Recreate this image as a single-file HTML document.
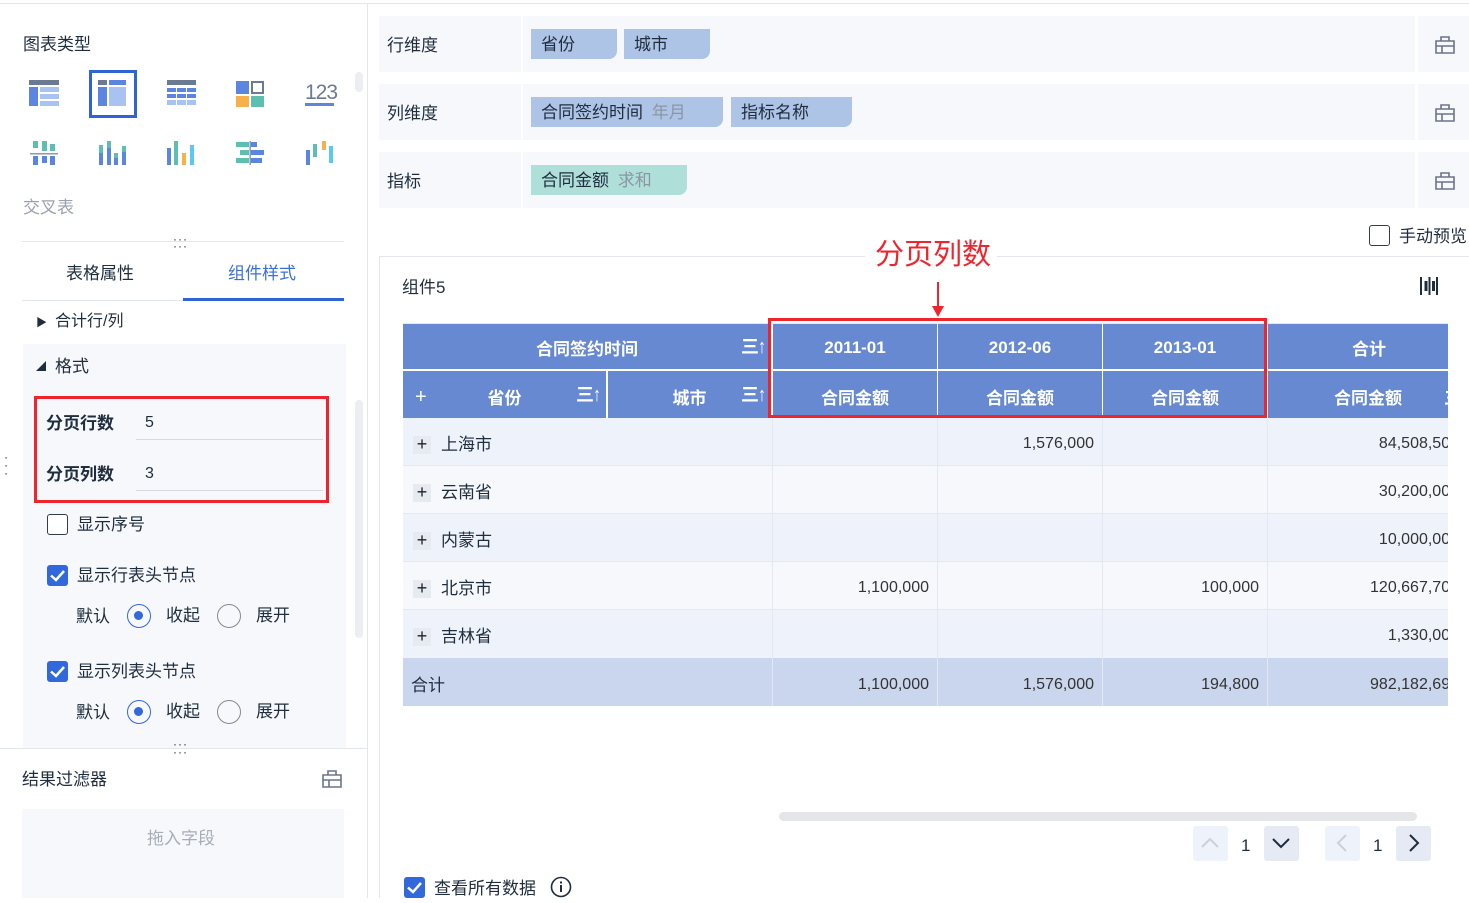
<!DOCTYPE html>
<html><head><meta charset="utf-8"><style>
*{box-sizing:border-box;margin:0;padding:0}
body{width:1469px;height:898px;overflow:hidden;background:#fff;font-family:"Liberation Sans","Noto Sans CJK SC",sans-serif;color:#1f2d3d;font-size:17px;position:relative}
.a{position:absolute}
.t{position:absolute;white-space:nowrap;line-height:1;transform:translateY(2px)}
.hc{position:absolute;background:#6689d2;color:#fff;font-weight:bold;font-size:17px;display:flex;align-items:center;justify-content:center;padding-top:3px}
.cell{position:absolute;text-align:right;padding-right:8px;line-height:48px;font-size:16px;color:#333;border-left:1px solid #e3e8f2}
.plus{position:absolute;width:18px;height:18px;background:#e6eaf1;color:#222;font-size:18px;line-height:17px;text-align:center;transform:translateY(2px)}
.chip{position:absolute;height:30px;background:#aec4e7;border-radius:0 0 8px 0;line-height:30px;padding-left:10px;font-size:17px;color:#1f2d3d;padding-top:1px}
.cb{position:absolute;width:21px;height:21px;border:1.5px solid #333c4a;border-radius:3px;background:#fff}
.cbc{position:absolute;width:21px;height:21px;border-radius:3px;background:#3168dc}
.rad{position:absolute;width:24px;height:24px;border-radius:50%;border:1.5px solid #888}
.rad.on{border-color:#3168dc}
.rad.on::after{content:"";position:absolute;left:6px;top:6px;width:9px;height:9px;border-radius:50%;background:#3168dc}
.srt{position:absolute;color:#fff;font-size:18px;font-weight:bold;white-space:nowrap;line-height:1}
.srt b{display:inline-block;font-size:20px;margin-left:-2px;transform:scaleX(.8)}
</style></head><body>
<div class="a" style="left:0;top:3px;width:1469px;height:1px;background:#e5e7eb"></div>
<div class="a" style="left:367px;top:4px;width:1px;height:894px;background:#e3e6ec"></div>
<div class="t" style="left:23px;top:34px">图表类型</div>
<svg class="a" style="left:26px;top:80px" width="34" height="28"><rect x="3" y="0" width="30" height="5" fill="#6b7a93"/><rect x="3" y="7" width="9" height="19" fill="#5b85e0"/><rect x="14" y="7" width="19" height="5" fill="#a8c2f2"/><rect x="14" y="14" width="19" height="5" fill="#a8c2f2"/><rect x="14" y="21" width="19" height="5" fill="#a8c2f2"/></svg>
<div class="a" style="left:89px;top:70px;width:48px;height:48px;border:3px solid #2f64d6"></div>
<svg class="a" style="left:98px;top:80px" width="30" height="28"><rect x="0" y="0" width="9" height="5" fill="#6b7a93"/><rect x="11" y="0" width="17" height="5" fill="#5b85e0"/><rect x="0" y="7" width="9" height="19" fill="#5b85e0"/><rect x="11" y="7" width="17" height="19" fill="#a8c2f2"/></svg>
<svg class="a" style="left:166px;top:80px" width="32" height="28"><rect x="1" y="0" width="29" height="5" fill="#6b7a93"/><g fill="#5b85e0"><rect x="1" y="8" width="9" height="4"/><rect x="11" y="8" width="9" height="4"/><rect x="21" y="8" width="9" height="4"/><rect x="1" y="14" width="9" height="4"/><rect x="11" y="14" width="9" height="4"/><rect x="21" y="14" width="9" height="4"/></g><g fill="#a8c2f2"><rect x="1" y="20" width="9" height="5"/><rect x="11" y="20" width="9" height="5"/><rect x="21" y="20" width="9" height="5"/></g></svg>
<svg class="a" style="left:236px;top:81px" width="30" height="27"><rect x="0" y="0" width="13" height="13" fill="#5b85e0"/><rect x="16" y="1" width="11" height="11" fill="none" stroke="#6b7a93" stroke-width="2"/><rect x="0" y="15" width="13" height="11" fill="#f7b04a"/><rect x="15" y="15" width="13" height="11" fill="#5dbfb0"/></svg>
<div class="t" style="left:305px;top:80px;font-size:21px;color:#6b7a93;letter-spacing:-1px">123</div>
<div class="a" style="left:305px;top:103px;width:29px;height:3px;background:#5b85e0"></div>
<svg class="a" style="left:30px;top:141px" width="28" height="26"><rect x="3" y="0" width="5" height="7" fill="#5dbfb0"/><rect x="12" y="0" width="5" height="10" fill="#5dbfb0"/><rect x="20" y="3" width="5" height="7" fill="#5dbfb0"/><rect x="0" y="12" width="28" height="1.5" fill="#8d99ad"/><rect x="3" y="15" width="5" height="9" fill="#5b85e0"/><rect x="12" y="15" width="5" height="7" fill="#5b85e0"/><rect x="20" y="15" width="5" height="9" fill="#5b85e0"/></svg>
<svg class="a" style="left:98px;top:141px" width="30" height="26"><rect x="1" y="4" width="4" height="20" fill="#5b85e0"/><rect x="1" y="4" width="4" height="8" fill="#5dbfb0"/><rect x="9" y="0" width="4" height="24" fill="#5b85e0"/><rect x="9" y="0" width="4" height="7" fill="#5dbfb0"/><rect x="16" y="12" width="4" height="12" fill="#5b85e0"/><rect x="16" y="12" width="4" height="5" fill="#5dbfb0"/><rect x="24" y="5" width="4" height="19" fill="#5b85e0"/><rect x="24" y="5" width="4" height="6" fill="#5dbfb0"/></svg>
<svg class="a" style="left:166px;top:141px" width="30" height="26"><rect x="1" y="7" width="4" height="17" fill="#5b85e0"/><rect x="8" y="0" width="4" height="24" fill="#5dbfb0"/><rect x="16" y="12" width="4" height="12" fill="#f7b04a"/><rect x="24" y="4" width="4" height="20" fill="#5ac8f0"/></svg>
<svg class="a" style="left:236px;top:141px" width="30" height="26"><rect x="0" y="1" width="13" height="5" fill="#5dbfb0"/><rect x="15" y="1" width="6" height="5" fill="#5b85e0"/><rect x="4" y="9" width="9" height="5" fill="#5dbfb0"/><rect x="15" y="9" width="13" height="5" fill="#5b85e0"/><rect x="0" y="17" width="13" height="5" fill="#5dbfb0"/><rect x="15" y="17" width="11" height="5" fill="#5b85e0"/><rect x="13.5" y="0" width="1.5" height="24" fill="#8d99ad"/></svg>
<svg class="a" style="left:305px;top:141px" width="30" height="26"><rect x="1" y="9" width="4" height="15" fill="#5b85e0"/><rect x="8" y="3" width="4" height="13" fill="#5dbfb0"/><rect x="17" y="0" width="4" height="9" fill="#f7b04a"/><rect x="24" y="5" width="4" height="17" fill="#5ac8f0"/></svg>
<div class="a" style="left:355px;top:72px;width:8px;height:20px;border-radius:4px;background:#eceef2"></div>
<div class="t" style="left:23px;top:197px;color:#9aa1ad">交叉表</div>
<div class="t" style="left:173px;top:231px;font-size:12px;letter-spacing:1px;color:#333">···</div>
<div class="a" style="left:22px;top:241px;width:322px;height:1px;background:#e3e6ec"></div>
<div class="t" style="left:173px;top:238px;font-size:12px;letter-spacing:1px;color:#333">···</div>
<div class="t" style="left:66px;top:263px">表格属性</div>
<div class="t" style="left:228px;top:263px;color:#3a6fe0">组件样式</div>
<div class="a" style="left:22px;top:300px;width:322px;height:1px;background:#e3e6ec"></div>
<div class="a" style="left:183px;top:298px;width:161px;height:3px;background:#2f64d6"></div>
<div class="t" style="left:36px;top:316px;font-size:11px">▶</div>
<div class="t" style="left:55px;top:312px;font-size:16px">合计行/列</div>
<div class="a" style="left:23px;top:344px;width:323px;height:404px;background:#f6f8fc"></div>
<div class="t" style="left:36px;top:361px;font-size:10px">◢</div>
<div class="t" style="left:55px;top:356px">格式</div>
<div class="a" style="left:355px;top:400px;width:8px;height:238px;border-radius:4px;background:#eceef2"></div>
<div class="t" style="left:4px;top:451px;font-size:12px;line-height:8px;color:#333;width:4px">·<br>·<br>·</div>
<div class="a" style="left:34px;top:396px;width:295px;height:107px;border:3px solid #f0242c"></div>
<div class="t" style="left:46px;top:413px;font-weight:bold">分页行数</div>
<div class="t" style="left:145px;top:413px;font-size:16px">5</div>
<div class="a" style="left:136px;top:439px;width:187px;height:1px;background:#d5d9e0"></div>
<div class="t" style="left:46px;top:464px;font-weight:bold">分页列数</div>
<div class="t" style="left:145px;top:464px;font-size:16px">3</div>
<div class="a" style="left:136px;top:490px;width:187px;height:1px;background:#d5d9e0"></div>
<div class="cb" style="left:47px;top:514px"></div>
<div class="t" style="left:77px;top:514px">显示序号</div>
<div class="cbc" style="left:47px;top:565px"><svg width="21" height="21"><path d="M4 10.5 L9 15 L17 6" stroke="#fff" stroke-width="2.5" fill="none"/></svg></div>
<div class="t" style="left:77px;top:565px">显示行表头节点</div>
<div class="t" style="left:76px;top:606px">默认</div>
<div class="rad on" style="left:127px;top:604px"></div>
<div class="t" style="left:166px;top:605px">收起</div>
<div class="rad" style="left:217px;top:604px"></div>
<div class="t" style="left:256px;top:605px">展开</div>
<div class="cbc" style="left:47px;top:661px"><svg width="21" height="21"><path d="M4 10.5 L9 15 L17 6" stroke="#fff" stroke-width="2.5" fill="none"/></svg></div>
<div class="t" style="left:77px;top:661px">显示列表头节点</div>
<div class="t" style="left:76px;top:702px">默认</div>
<div class="rad on" style="left:127px;top:700px"></div>
<div class="t" style="left:166px;top:701px">收起</div>
<div class="rad" style="left:217px;top:700px"></div>
<div class="t" style="left:256px;top:701px">展开</div>
<div class="t" style="left:173px;top:736px;font-size:12px;letter-spacing:1px;color:#333">···</div>
<div class="a" style="left:0;top:748px;width:367px;height:1px;background:#e3e6ec"></div>
<div class="t" style="left:173px;top:744px;font-size:12px;letter-spacing:1px;color:#333">···</div>
<div class="t" style="left:22px;top:769px">结果过滤器</div>
<svg class="a" style="left:322px;top:769px" width="20" height="20"><path d="M6 6V2h8v4M1 6h18v12H1zM1 11h18M7 11v7" stroke="#6b7589" stroke-width="1.6" fill="none"/></svg>
<div class="a" style="left:22px;top:809px;width:322px;height:89px;background:#f6f8fc"></div>
<div class="t" style="left:147px;top:828px;color:#a7adb8">拖入字段</div>

<div class="a" style="left:379px;top:16px;width:1090px;height:56px;background:#f6f8fc"></div>
<div class="a" style="left:379px;top:84px;width:1090px;height:56px;background:#f6f8fc"></div>
<div class="a" style="left:379px;top:152px;width:1090px;height:56px;background:#f6f8fc"></div>
<div class="a" style="left:521px;top:16px;width:2px;height:192px;background:#fff"></div>
<div class="a" style="left:1415px;top:16px;width:3px;height:192px;background:#fff"></div>
<div class="a" style="left:379px;top:72px;width:1090px;height:12px;background:#fff"></div>
<div class="a" style="left:379px;top:140px;width:1090px;height:12px;background:#fff"></div>
<div class="t" style="left:387px;top:35px">行维度</div>
<div class="t" style="left:387px;top:103px">列维度</div>
<div class="t" style="left:387px;top:171px">指标</div>
<div class="chip" style="left:531px;top:29px;width:86px">省份</div>
<div class="chip" style="left:624px;top:29px;width:86px">城市</div>
<div class="chip" style="left:531px;top:97px;width:192px">合同签约时间 <span style="color:#8d95a3;margin-left:4px">年月</span></div>
<div class="chip" style="left:731px;top:97px;width:121px">指标名称</div>
<div class="chip" style="left:531px;top:165px;width:156px;background:#afdfd9">合同金额 <span style="color:#8d95a3;margin-left:4px">求和</span></div>
<svg class="a" style="left:1435px;top:35px" width="20" height="20"><path d="M6 6V2h8v4M1 6h18v12H1zM1 11h18M7 11v7" stroke="#6b7589" stroke-width="1.6" fill="none"/></svg>
<svg class="a" style="left:1435px;top:103px" width="20" height="20"><path d="M6 6V2h8v4M1 6h18v12H1zM1 11h18M7 11v7" stroke="#6b7589" stroke-width="1.6" fill="none"/></svg>
<svg class="a" style="left:1435px;top:171px" width="20" height="20"><path d="M6 6V2h8v4M1 6h18v12H1zM1 11h18M7 11v7" stroke="#6b7589" stroke-width="1.6" fill="none"/></svg>
<div class="cb" style="left:1369px;top:225px"></div>
<div class="t" style="left:1399px;top:226px">手动预览</div>

<div class="a" style="left:379px;top:256px;width:1090px;height:1px;background:#e3e6ef"></div>
<div class="a" style="left:379px;top:256px;width:1px;height:642px;background:#e3e6ef"></div>
<div class="a" style="left:865px;top:240px;width:132px;height:30px;background:#fff"></div>
<div class="t" style="left:875px;top:239px;font-size:29px;color:#f0242c">分页列数</div>
<div class="a" style="left:937px;top:282px;width:2px;height:30px;background:#f0242c"></div>
<svg class="a" style="left:932px;top:306px" width="12" height="12"><path d="M0 0h12L6 11z" fill="#f0242c"/></svg>
<div class="t" style="left:402px;top:277px">组件5</div>
<svg class="a" style="left:1419px;top:276px" width="20" height="20"><rect x="1" y="1" width="2" height="18" fill="#1f2d3d"/><rect x="5.5" y="5" width="3" height="10" fill="#1f2d3d"/><rect x="9.5" y="1" width="2" height="18" fill="#1f2d3d"/><rect x="13" y="5" width="3" height="10" fill="#1f2d3d"/><rect x="17" y="1" width="2" height="18" fill="#1f2d3d"/></svg>

<div class="a" style="left:403px;top:323px;width:1045px;height:384px;overflow:hidden">
 <div class="a" style="left:0;top:0;width:1045px;height:384px;background:#fff"></div>
 <div class="hc" style="left:0;top:0;width:368px;height:46px">合同签约时间</div>
 <div class="hc" style="left:370px;top:0;width:164px;height:46px">2011-01</div>
 <div class="hc" style="left:535px;top:0;width:164px;height:46px">2012-06</div>
 <div class="hc" style="left:700px;top:0;width:164px;height:46px">2013-01</div>
 <div class="hc" style="left:865px;top:0;width:200px;height:46px;justify-content:flex-start;padding-left:84px">合计</div>
 <div class="hc" style="left:0;top:48px;width:203px;height:47px">省份</div>
 <div class="hc" style="left:205px;top:48px;width:163px;height:47px">城市</div>
 <div class="hc" style="left:370px;top:48px;width:164px;height:47px">合同金额</div>
 <div class="hc" style="left:535px;top:48px;width:164px;height:47px">合同金额</div>
 <div class="hc" style="left:700px;top:48px;width:164px;height:47px">合同金额</div>
 <div class="hc" style="left:865px;top:48px;width:200px;height:47px;justify-content:flex-start;padding-left:66px">合同金额<span style="margin-left:42px">三</span></div>
 <div class="t" style="left:12px;top:62px;color:#fff;font-size:20px">+</div>
 <div class="srt" style="left:338px;top:14px">三<b>↑</b></div>
 <div class="srt" style="left:173px;top:62px">三<b>↑</b></div>
 <div class="srt" style="left:338px;top:62px">三<b>↑</b></div>
 <div class="a" style="left:0;top:95px;width:1045px;height:48px;background:#eef2fa;border-bottom:1px solid #e3e8f2"></div>
 <div class="a" style="left:0;top:143px;width:1045px;height:48px;background:#f6f8fc;border-bottom:1px solid #e3e8f2"></div>
 <div class="a" style="left:0;top:191px;width:1045px;height:48px;background:#eef2fa;border-bottom:1px solid #e3e8f2"></div>
 <div class="a" style="left:0;top:239px;width:1045px;height:48px;background:#f6f8fc;border-bottom:1px solid #e3e8f2"></div>
 <div class="a" style="left:0;top:287px;width:1045px;height:48px;background:#eef2fa"></div>
 <div class="a" style="left:0;top:335px;width:1045px;height:48px;background:#c9d6ee"></div>
 <div class="plus" style="left:10px;top:111px">+</div><div class="t" style="left:38px;top:111px">上海市</div>
 <div class="plus" style="left:10px;top:159px">+</div><div class="t" style="left:38px;top:159px">云南省</div>
 <div class="plus" style="left:10px;top:207px">+</div><div class="t" style="left:38px;top:207px">内蒙古</div>
 <div class="plus" style="left:10px;top:255px">+</div><div class="t" style="left:38px;top:255px">北京市</div>
 <div class="plus" style="left:10px;top:303px">+</div><div class="t" style="left:38px;top:303px">吉林省</div>
 <div class="t" style="left:8px;top:352px">合计</div>
 <div class="cell" style="left:369px;top:95px;width:165px;height:288px"></div>
 <div class="cell" style="left:534px;top:95px;width:165px;height:288px"></div>
 <div class="cell" style="left:699px;top:95px;width:165px;height:288px"></div>
 <div class="cell" style="left:864px;top:95px;width:200px;height:288px"></div>
 <div class="t" style="left:534px;top:111px;width:157px;text-align:right;font-size:16px;color:#333">1,576,000</div>
 <div class="t" style="left:864px;top:111px;width:192px;text-align:right;font-size:16px;color:#333">84,508,500</div>
 <div class="t" style="left:864px;top:159px;width:192px;text-align:right;font-size:16px;color:#333">30,200,000</div>
 <div class="t" style="left:864px;top:207px;width:192px;text-align:right;font-size:16px;color:#333">10,000,000</div>
 <div class="t" style="left:369px;top:255px;width:157px;text-align:right;font-size:16px;color:#333">1,100,000</div>
 <div class="t" style="left:699px;top:255px;width:157px;text-align:right;font-size:16px;color:#333">100,000</div>
 <div class="t" style="left:864px;top:255px;width:192px;text-align:right;font-size:16px;color:#333">120,667,700</div>
 <div class="t" style="left:864px;top:303px;width:192px;text-align:right;font-size:16px;color:#333">1,330,000</div>
 <div class="t" style="left:369px;top:352px;width:157px;text-align:right;font-size:16px;color:#333">1,100,000</div>
 <div class="t" style="left:534px;top:352px;width:157px;text-align:right;font-size:16px;color:#333">1,576,000</div>
 <div class="t" style="left:699px;top:352px;width:157px;text-align:right;font-size:16px;color:#333">194,800</div>
 <div class="t" style="left:864px;top:352px;width:192px;text-align:right;font-size:16px;color:#333">982,182,690</div>
</div>
<div class="a" style="left:403px;top:323px;width:1045px;height:1px;background:#e3e8f2"></div>
<div class="a" style="left:768px;top:318px;width:499px;height:100px;border:3px solid #f0242c"></div>

<div class="a" style="left:779px;top:812px;width:638px;height:9px;border-radius:5px;background:#e5e6e9"></div>
<div class="a" style="left:1193px;top:826px;width:35px;height:35px;border-radius:3px;background:#eef2fa"></div>
<svg class="a" style="left:1200px;top:836px" width="20" height="14"><path d="M2 11 L10 3 L18 11" stroke="#ccd1d9" stroke-width="2" fill="none"/></svg>
<div class="t" style="left:1241px;top:835px;font-size:17px">1</div>
<div class="a" style="left:1264px;top:826px;width:35px;height:35px;border-radius:3px;background:#e5eaf5"></div>
<svg class="a" style="left:1271px;top:836px" width="20" height="14"><path d="M2 3 L10 11 L18 3" stroke="#1f2d3d" stroke-width="2" fill="none"/></svg>
<div class="a" style="left:1325px;top:826px;width:35px;height:35px;border-radius:3px;background:#eef2fa"></div>
<svg class="a" style="left:1335px;top:833px" width="14" height="20"><path d="M11 2 L3 10 L11 18" stroke="#ccd1d9" stroke-width="2" fill="none"/></svg>
<div class="t" style="left:1373px;top:835px;font-size:17px">1</div>
<div class="a" style="left:1396px;top:826px;width:35px;height:35px;border-radius:3px;background:#e5eaf5"></div>
<svg class="a" style="left:1407px;top:833px" width="14" height="20"><path d="M3 2 L11 10 L3 18" stroke="#1f2d3d" stroke-width="2" fill="none"/></svg>
<div class="cbc" style="left:404px;top:877px"><svg width="21" height="21"><path d="M4 10.5 L9 15 L17 6" stroke="#fff" stroke-width="2.5" fill="none"/></svg></div>
<div class="t" style="left:434px;top:878px">查看所有数据</div>
<svg class="a" style="left:550px;top:876px" width="22" height="22"><circle cx="11" cy="11" r="9.5" stroke="#1f2d3d" stroke-width="1.6" fill="none"/><rect x="10" y="9" width="2" height="7" fill="#1f2d3d"/><rect x="10" y="5.5" width="2" height="2" fill="#1f2d3d"/></svg>
</body></html>
